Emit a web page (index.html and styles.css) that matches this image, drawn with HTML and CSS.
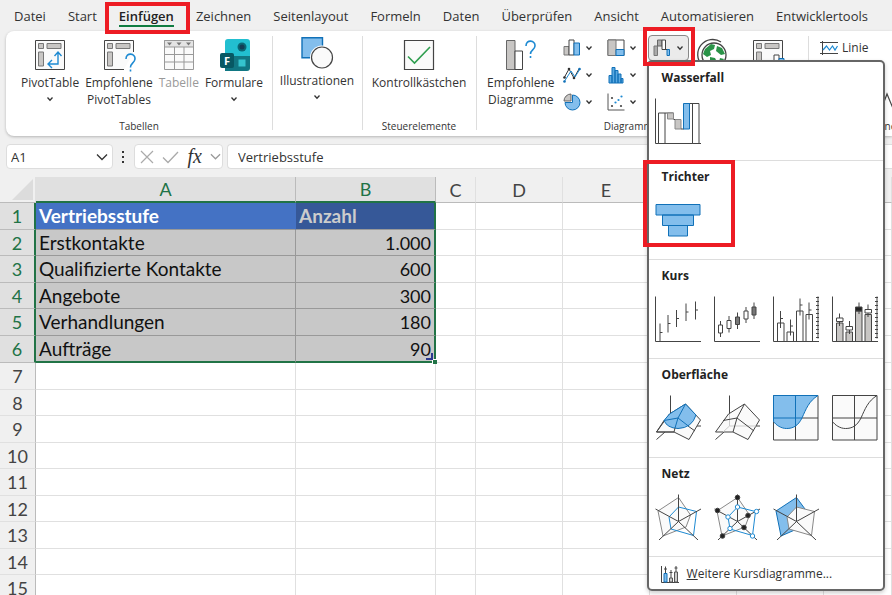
FILE: index.html
```html
<!DOCTYPE html>
<html lang="de">
<head>
  <meta charset="UTF-8">
  <meta name="viewport" content="width=device-width, initial-scale=1.0">
  <title>Trichterdiagramm einfügen</title>
  <link rel="stylesheet" href="styles.css">
</head>
<body>
  <svg class="defs" aria-hidden="true">
    <symbol id="chevron" viewBox="0 0 8 8"><path d="M1.5 2.5 4 5.2 6.5 2.5" fill="none" stroke="#333" stroke-width="1.3"/></symbol>
  </svg>

  <!-- Registerkarten -->
  <nav class="tabs">
    <a href="#">Datei</a>
    <a href="#">Start</a>
    <a href="#" class="active">Einfügen</a>
    <a href="#">Zeichnen</a>
    <a href="#">Seitenlayout</a>
    <a href="#">Formeln</a>
    <a href="#">Daten</a>
    <a href="#">Überprüfen</a>
    <a href="#">Ansicht</a>
    <a href="#">Automatisieren</a>
    <a href="#">Entwicklertools</a>
  </nav>

  <!-- Menüband -->
  <div class="ribbon">
    <section class="group group-tables">
      <div class="tools">
        <button class="tool">
          <svg class="icon" viewBox="0 0 32 32"><path d="M1.5 1.5h29v29h-29z" fill="#fafafa" stroke="#444"/><path d="M4.5 4.5h5v5h-5zM13 4.5h14v5H13zM4.5 13h5v14h-5z" fill="#c8c6c4" stroke="#777"/><path d="M24 13.5v11.5H14.5M20.5 17l3.500-4 3.500 4M18 21l-4 4 4 4" fill="none" stroke="#1e8ad2" stroke-width="1.4"/></svg>
          <span>PivotTable</span>
          <svg class="chev"><use href="#chevron"/></svg>
        </button>
        <button class="tool">
          <svg class="icon" viewBox="0 0 32 32"><path d="M21 30.5H1.5v-29h29V13" fill="#fafafa" stroke="#444"/><path d="M4.5 4.5h5v5h-5zM13 4.5h14v5H13zM4.5 13h5v14h-5z" fill="#c8c6c4" stroke="#777"/><path d="M23 20c0-7 9.500-6 9 0-.4 4-4.500 4-4.500 8.500M27.500 30.500v2" fill="none" stroke="#1e8ad2" stroke-width="1.6"/></svg>
          <span>Empfohlene<br>PivotTables</span>
        </button>
        <button class="tool" disabled>
          <svg class="icon" viewBox="0 0 32 32"><path d="M1.5 1.5h29v29h-29z" fill="#fafafa" stroke="#999"/><path d="M1.5 1.5h29V8h-29z" fill="#e4e4e4" stroke="#999"/><path d="M1.5 15.5h29M1.5 23h29M11.5 8v22.500M21 8v22.500" stroke="#999"/><path d="M4 3.500h5L6.500 6.500zM13.500 3.500h5L16 6.500zM23 3.500h5l-2.500 3z" fill="#777"/></svg>
          <span>Tabelle</span>
        </button>
        <button class="tool">
          <svg class="icon" viewBox="0 0 32 32"><rect x="7" width="25" height="20" rx="3" fill="#22bfd0"/><path d="M7 17h25v12a3 3 0 0 1-3 3H7z" fill="#117783"/><circle cx="24" cy="8" r="4.500" fill="#0a6775"/><circle cx="24" cy="8" r="2.500" fill="#143d55"/><path d="M20.500 20.500h7v7h-7z" fill="#35c4ce"/><rect x="2" y="14" width="14" height="15" rx="2" fill="#075863"/><text x="9" y="26" text-anchor="middle" class="logo-letter">F</text></svg>
          <span>Formulare</span>
          <svg class="chev"><use href="#chevron"/></svg>
        </button>
      </div>
      <div class="group-name">Tabellen</div>
    </section>

    <section class="group group-illustrations">
      <div class="tools">
        <button class="tool">
          <svg class="icon" viewBox="0 0 32 32"><path d="M1 .7h20.500v20H1z" fill="#83beec" stroke="#1171b8" stroke-width="1.4"/><circle cx="21" cy="20.500" r="12" fill="#fff"/><circle cx="21" cy="20.500" r="10.500" fill="#fafafa" stroke="#444" stroke-width="1.2"/></svg>
          <span>Illustrationen</span>
          <svg class="chev"><use href="#chevron"/></svg>
        </button>
      </div>
    </section>

    <section class="group group-controls">
      <div class="tools">
        <button class="tool">
          <svg class="icon" viewBox="0 0 32 32"><path d="M1.5 1.5h29v29h-29z" fill="#fafafa" stroke="#444" stroke-width="1.2"/><path d="M5 17.500 11.500 24 27 8" fill="none" stroke="#2f9e4f" stroke-width="1.6"/></svg>
          <span>Kontrollkästchen</span>
        </button>
      </div>
      <div class="group-name">Steuerelemente</div>
    </section>

    <section class="group group-charts">
      <div class="tools">
        <button class="tool">
          <svg class="icon" viewBox="0 0 32 32"><path d="M1.5 1.5h8.500v29H1.5z" fill="#c8c6c4" stroke="#666"/><path d="M10 12h7.500v18.500H10z" fill="#fff" stroke="#444"/><path d="M21 7c0-7 9.500-6 9 0-.4 4-4.500 4-4.500 8M25.500 17v2" fill="none" stroke="#1e8ad2" stroke-width="1.6"/></svg>
          <span>Empfohlene<br>Diagramme</span>
        </button>
        <div class="chart-grid">
          <button class="mini" aria-label="Säulendiagramm">
            <svg viewBox="0 0 18 18"><path d="M1 7.500h5v8.500H1z" fill="#c8c6c4" stroke="#777"/><path d="M6 1h5v15H6z" fill="#fff" stroke="#444"/><path d="M11 4h5.500v12H11z" fill="#83beec" stroke="#1171b8"/></svg>
            <svg class="chev"><use href="#chevron"/></svg>
          </button>
          <button class="mini" aria-label="Hierarchiediagramm">
            <svg viewBox="0 0 18 18"><path d="M1 1h16v15.500H1z" fill="#fff" stroke="#444"/><path d="M1 1h8v15.500H1z" fill="#c8c6c4" stroke="#777"/><path d="M9 10.500h8v6H9z" fill="#83beec" stroke="#1171b8"/></svg>
            <svg class="chev"><use href="#chevron"/></svg>
          </button>
          <div class="picker">
            <button class="mini open" aria-label="Wasserfall-, Trichter-, Kurs-, Oberflächen- oder Netzdiagramm" aria-expanded="true">
              <svg viewBox="0 0 18 18"><path d="M1 7h3.500v9.500H1z" fill="#aaa" stroke="#777"/><path d="M4.500 1H9v6H4.500z" fill="#aaa" stroke="#666"/><path d="M9 1h3.500v9.500H9z" fill="#fff" stroke="#444"/><path d="M14 10.500h2.500v6H14z" fill="#83beec" stroke="#1171b8"/><path d="M12 10.500h2" stroke="#444"/></svg>
              <svg class="chev"><use href="#chevron"/></svg>
            </button>

            <!-- Aufgeklapptes Diagrammmenü -->
            <div class="menu">
              <section class="menu-section">
                <h2>Wasserfall</h2>
                <div class="choices">
                  <button class="choice" aria-label="Wasserfall">
                    <svg viewBox="0 0 46 46" class="line"><path d="M.5 .5v45H46" fill="none"/><path d="M3.500 15H10v30.500H3.500z" fill="#fff"/><path d="M10 15h8.500" /><path d="M12.500 15h6v6h-6zM20 21.500h6V31h-6z" class="grey"/><path d="M18.500 21.500H20M26 31h3" /><path d="M37.500 5.500H44v40h-6.500z" fill="#fff"/><path d="M34 5.500h4"/><path d="M28.500 5.500h6V31h-6z" class="blue"/></svg>
                  </button>
                </div>
              </section>
              <section class="menu-section marked">
                <h2>Trichter</h2>
                <div class="choices">
                  <button class="choice" aria-label="Trichter">
                    <svg viewBox="0 0 46 46" class="line"><path d="M1 7.500h44V18H1zM7.500 18h31v10.500h-31zM13.500 28.500h19V39h-19z" class="blue"/></svg>
                  </button>
                </div>
              </section>
              <section class="menu-section">
                <h2>Kurs</h2>
                <div class="choices">
                  <button class="choice" aria-label="Kurs: Höchst-Tiefst-Geschlossen">
                    <svg viewBox="0 0 46 46" class="line"><path d="M.5 .5v45H46M5 27.500V45M5 36.500h2.500M13 19v17.500M13 27.500h2.500M21.500 14v17M21.500 22.500H24M31 7.500V25M31 16h2.500M40.500 5.500v18M40.500 14H43" fill="none"/></svg>
                  </button>
                  <button class="choice" aria-label="Kurs: Öffnung-Höchst-Tiefst-Geschlossen">
                    <svg viewBox="0 0 46 46" class="line"><path d="M.5 .5v45H46M6.500 25v16M15 20v16.500M23.500 16.500V33M32 11v16M40 6.500V23" fill="none"/><path d="M4.500 29h4v8h-4zM13 24.500h4v8h-4zM30 15h4v8h-4z" fill="#fff"/><path d="M21.500 21h4v7.500h-4zM38 11h4v8h-4z" fill="#777"/></svg>
                  </button>
                  <button class="choice" aria-label="Kurs: Volumen-Höchst-Tiefst-Geschlossen">
                    <svg viewBox="0 0 46 46" class="line"><path d="M4.500 27H11v18.500H4.500zM14 36h6.500v9.500H14zM23.500 15H30v30.500h-6.500zM33 18.500h6.500v27H33z" fill="#fff"/><path d="M.5 .5v45H46M7.500 15v17M7.500 22.500H10M17.500 23.500v16M17.500 30H20M27 2.500v17M27 9h2.500M36 6.500v17M36 14h2.500M45 .5v42" fill="none"/><path d="M45 1v44" class="ticks"/></svg>
                  </button>
                  <button class="choice" aria-label="Kurs: Volumen-Öffnung-Höchst-Tiefst-Geschlossen">
                    <svg viewBox="0 0 46 46" class="line"><path d="M4.500 27H11v18.500H4.500zM14 36h6.500v9.500H14zM23.500 15H30v30.500h-6.500zM33 18.500h6.500v27H33z" fill="#c8c6c4"/><path d="M.5 .5v45H46M7.500 17.500V30M17.500 25v13M27 6.500V18M36 8.500V21M45 .5v42" fill="none"/><path d="M4.500 22H11v3.500H4.500zM14 30.500h6.500V34H14zM33 13.500h6.500V17H33z" fill="#fff"/><path d="M23.500 11H30v4h-6.500z" fill="#222"/><path d="M45 1v44" class="ticks"/></svg>
                  </button>
                </div>
              </section>
              <section class="menu-section">
                <h2>Oberfläche</h2>
                <div class="choices">
                  <button class="choice" aria-label="3D-Oberfläche">
                    <svg viewBox="0 0 46 46" class="line"><path d="M15.500 .5V19M1.500 44.500 10 37M42 31h4" fill="none"/><path d="M14.500 19 30.500 9l15 16L34 44.500 19 37H1.500z" fill="#fafafa"/><path d="M14.500 19 30.500 9 41 20q-4 13-18 13.500Q12 33 9 25.500z" class="blue"/><path d="M9 25.500 1.500 37H19l1-4M33 31l7 5" fill="none"/><path d="M30.500 9 23 23l-3 10M9 25.500 23 23l11 8.500" fill="none" class="blue-line"/></svg>
                  </button>
                  <button class="choice" aria-label="3D-Oberfläche (Drahtmodell)">
                    <svg viewBox="0 0 46 46" class="line"><path d="M15.500 .5V19M1.500 44.500 10 37M42 31h4" fill="none"/><path d="M14.500 19 30.500 9l15 16L34 44.500 19 37H1.500z" fill="#fafafa"/><path d="M15.500 19v12H42M15.500 31 9 37" fill="none" stroke="#ccc"/><path d="M30.500 9 23 23l-4 14M9 25.500 23 23l17 13" fill="none"/></svg>
                  </button>
                  <button class="choice" aria-label="Oberfläche">
                    <svg viewBox="0 0 46 46" class="line"><path d="M.5 .5H45v44.500H.5z" fill="#fafafa"/><path d="M22.500 .5V45M.5 23H45" /><path d="M.5 .5H45C36 6 33 14 29 23c-4 8-9 10.500-15.500 10.500C8 33.500 3 30 .5 26.500z" class="blue"/><path d="M22.500 .5V31M.5 23H29" class="blue-line"/></svg>
                  </button>
                  <button class="choice" aria-label="Oberfläche (Drahtmodell)">
                    <svg viewBox="0 0 46 46" class="line"><path d="M.5 .5H45v44.500H.5z" fill="#fafafa"/><path d="M22.500 .5V45M.5 23H45M45 .5C36 6 33 14 29 23c-4 8-9 10.500-15.500 10.500C8 33.500 3 30 .5 26.500" fill="none"/></svg>
                  </button>
                </div>
              </section>
              <section class="menu-section">
                <h2>Netz</h2>
                <div class="choices">
                  <button class="choice" aria-label="Netz">
                    <svg viewBox="0 0 46 46" class="line"><path d="M23.500 3.500 3 17l5 25 23-9 4.500-12z" fill="#fafafa" stroke="#888"/><path d="m23.500 13 18 4.500-3 24L16 35l-2-12z" fill="none" stroke="#1e8ad2"/><path d="M23.500 27.500V.5M23.500 27.500 46 15M23.500 27.500 43 46M23.500 27.500 4 46M23.500 27.500.5 15"/></svg>
                  </button>
                  <button class="choice" aria-label="Netz mit Datenpunkten">
                    <svg viewBox="0 0 46 46" class="line"><path d="M23.500 3.500 3 17l5 25 23-9 4.500-12z" fill="#fafafa" stroke="#888"/><path d="M23.500 27.500V.5M23.500 27.500 46 15M23.500 27.500 43 46M23.500 27.500 4 46M23.500 27.500.5 15"/><path d="m23.500 13 18 4.500-3 24L16 35l-2-12z" fill="none" stroke="#1e8ad2"/><g fill="#222"><circle cx="23.500" cy="3.500" r="2.300"/><circle cx="3.500" cy="16.500" r="2.300"/><circle cx="8.500" cy="42" r="2.300"/><circle cx="30" cy="33.500" r="2.300"/><circle cx="34" cy="21.500" r="2.300"/></g><g fill="#fff" stroke="#1e8ad2"><circle cx="23.500" cy="13" r="2.200"/><circle cx="42.500" cy="17.500" r="2.200"/><circle cx="38.500" cy="42" r="2.200"/><circle cx="16" cy="34.500" r="2.200"/><circle cx="14" cy="23" r="2.200"/></g></svg>
                  </button>
                  <button class="choice" aria-label="Gefülltes Netz">
                    <svg viewBox="0 0 46 46" class="line"><path d="M23.500 3.500 3 17l5 25 16-7 8-20z" class="blue"/><path d="m23.500 13 18 4.500-3 24L16 35l-2-12z" fill="#fafafa" stroke="#888"/><path d="M23.500 27.500V.5M23.500 27.500 46 15M23.500 27.500 43 46M23.500 27.500 4 46M23.500 27.500.5 15"/></svg>
                  </button>
                </div>
              </section>
              <button class="menu-more">
                <svg viewBox="0 0 18 18"><path d="M.5 1v16.500H18M4.500 1.500V8M10 5v8M15 1v9" fill="none" stroke="#444"/><path d="M3 8.500h3v8.500H3z" fill="#83beec" stroke="#1171b8"/><path d="M8.500 13h3v4h-3zM13.500 7h3v10h-3z" fill="#ccc" stroke="#555"/><path d="M3 4h3M8.500 7.500h3M13.500 3h3" stroke="#444"/></svg>
                <span><u>W</u>eitere Kursdiagramme...</span>
              </button>
            </div>
          </div>
          <button class="mini" aria-label="Liniendiagramm">
            <svg viewBox="0 0 18 18"><path d="M1 12 6 3l5 9 5-9" fill="none" stroke="#333"/><path d="m1 16 7-11 4 6 5-8" fill="none" stroke="#1e8ad2"/><g fill="#333"><circle cx="6" cy="3" r="1.300"/><circle cx="11" cy="12" r="1.300"/><circle cx="1.500" cy="11.500" r="1.300"/></g><g fill="#1171b8"><circle cx="1.500" cy="15.500" r="1.300"/><circle cx="16.500" cy="3" r="1.300"/></g></svg>
            <svg class="chev"><use href="#chevron"/></svg>
          </button>
          <button class="mini second" aria-label="Statistikdiagramm">
            <svg viewBox="0 0 18 18"><path d="M2 9.500h3V17H2zM5 1.500h3V17H5zM8 4.500h3V17H8zM11 8h3v9h-3zM14 12.500h2V17h-2z" fill="#5aa8e0" stroke="#1171b8"/></svg>
            <svg class="chev"><use href="#chevron"/></svg>
          </button>
          <button class="mini" aria-label="Kreisdiagramm">
            <svg viewBox="0 0 18 18"><path d="M9.500 2A7.500 7.500 0 1 1 2 9.500h7.500z" fill="#83beec" stroke="#1171b8"/><path d="M8 8H1a7 7 0 0 1 7-7z" fill="#c8c6c4" stroke="#666"/></svg>
            <svg class="chev"><use href="#chevron"/></svg>
          </button>
          <button class="mini second" aria-label="Punktdiagramm">
            <svg viewBox="0 0 18 18"><path d="M1 .5v16.500h16.500" fill="none" stroke="#555"/><g fill="#444"><circle cx="5" cy="5" r="1.100"/><circle cx="5" cy="13" r="1.100"/><circle cx="14" cy="13" r="1.100"/></g><g fill="#1e8ad2"><circle cx="8.500" cy="9.500" r="1.100"/><circle cx="14.500" cy="3.500" r="1.100"/><circle cx="11.500" cy="7" r="1.100"/></g></svg>
            <svg class="chev"><use href="#chevron"/></svg>
          </button>
        </div>
        <button class="tool tool-maps" aria-label="Karten">
          <svg class="icon" viewBox="0 0 32 32"><path d="M25 3A15 15 0 0 0 6 26" fill="none" stroke="#444" stroke-width="1.3"/><circle cx="18" cy="16" r="12" fill="#fff" stroke="#444" stroke-width="1.3"/><path d="m9 10 6-5 4 1-1 4-4 2 1 4-4 2-4-3zM21 7l5 2 3 6-4 1-5-4zM14 18l5 1 2 4-3 5-4-3zM24 19l4 1-3 5-2-2z" fill="#2a9348"/></svg>
        </button>
        <button class="tool" aria-label="PivotChart">
          <svg class="icon" viewBox="0 0 32 32"><path d="M1.5 1.5h29v29h-29z" fill="#fafafa" stroke="#444"/><path d="M4.500 4.500h5v5h-5zM13 4.500h14v5H13zM4.500 13h5v14h-5z" fill="#c8c6c4" stroke="#777"/><path d="M22 16h5v15h-5z" fill="#fff" stroke="#444"/><path d="M27 19.500h5V31h-5z" fill="#83beec" stroke="#1171b8"/></svg>
        </button>
      </div>
      <div class="group-name">Diagramme</div>
    </section>

    <section class="group group-sparklines">
      <div class="tools">
        <button class="spark">
          <svg viewBox="0 0 18 14"><path d="M0 1.500h18M0 12.500h18M2.500 0v14" stroke="#444"/><path d="m3 9 3.500-4 3 4 3-4 2.500 4L17.500 5" fill="none" stroke="#1e8ad2" stroke-width="1.2"/></svg>
          <span>Linie</span>
        </button>
        <svg class="slicer" viewBox="0 0 18 18"><path d="m0 11 3-8 5 12 4-12 5 8" fill="none" stroke="#444" stroke-width="1.2"/></svg>
      </div>
      <div class="group-name">Sparklines</div>
    </section>
  </div>

  <!-- Bearbeitungsleiste -->
  <div class="formula-bar">
    <div class="box name-box">
      <input type="text" value="A1" aria-label="Namenfeld">
      <button aria-label="Namen anzeigen"><svg viewBox="0 0 12 12"><path d="m1 3.500 5 5 5-5" fill="none" stroke="#333" stroke-width="1.3"/></svg></button>
    </div>
    <svg class="dots" viewBox="0 0 4 14"><path d="M1 1h2v2H1zM1 6h2v2H1zM1 11h2v2H1z" fill="#333"/></svg>
    <div class="box fx-box">
      <button aria-label="Abbrechen"><svg viewBox="0 0 14 14"><path d="m1 1 12 12M13 1 1 13" stroke="#aaa" stroke-width="1.2"/></svg></button>
      <button aria-label="Eingeben"><svg class="check" viewBox="0 0 17 14"><path d="m1 7.500 5 5L16 2" fill="none" stroke="#aaa" stroke-width="1.3"/></svg></button>
      <button class="fx" aria-label="Funktion einfügen">fx</button>
      <button aria-label="Funktionen"><svg class="small" viewBox="0 0 12 12"><path d="m1 3.500 5 5 5-5" fill="none" stroke="#999" stroke-width="1.3"/></svg></button>
    </div>
    <input class="box formula" type="text" value="Vertriebsstufe" aria-label="Bearbeitungsleiste">
  </div>

  <!-- Tabellenblatt -->
  <table class="sheet">
    <colgroup>
      <col class="col-num"><col class="col-a"><col class="col-b"><col class="col-c"><col class="col-d"><col class="col-d"><col class="col-d"><col class="col-d"><col>
    </colgroup>
    <thead>
      <tr><th class="corner"><svg viewBox="0 0 21 21"><path d="M21 0v21H0z" fill="#dcdcdc"/></svg></th><th class="sel">A</th><th class="sel">B</th><th>C</th><th>D</th><th>E</th><th></th><th></th><th></th></tr>
    </thead>
    <tbody class="selected">
      <tr class="title"><th>1</th><td>Vertriebsstufe</td><td>Anzahl</td><td></td><td></td><td></td><td></td><td></td><td></td></tr>
      <tr><th>2</th><td>Erstkontakte</td><td>1.000</td><td></td><td></td><td></td><td></td><td></td><td></td></tr>
      <tr><th>3</th><td>Qualifizierte Kontakte</td><td>600</td><td></td><td></td><td></td><td></td><td></td><td></td></tr>
      <tr><th>4</th><td>Angebote</td><td>300</td><td></td><td></td><td></td><td></td><td></td><td></td></tr>
      <tr><th>5</th><td>Verhandlungen</td><td>180</td><td></td><td></td><td></td><td></td><td></td><td></td></tr>
      <tr><th>6</th><td>Aufträge</td><td>90<i class="handle"></i></td><td></td><td></td><td></td><td></td><td></td><td></td></tr>
    </tbody>
    <tbody>
      <tr><th>7</th><td></td><td></td><td></td><td></td><td></td><td></td><td></td><td></td></tr>
      <tr><th>8</th><td></td><td></td><td></td><td></td><td></td><td></td><td></td><td></td></tr>
      <tr><th>9</th><td></td><td></td><td></td><td></td><td></td><td></td><td></td><td></td></tr>
      <tr><th>10</th><td></td><td></td><td></td><td></td><td></td><td></td><td></td><td></td></tr>
      <tr><th>11</th><td></td><td></td><td></td><td></td><td></td><td></td><td></td><td></td></tr>
      <tr><th>12</th><td></td><td></td><td></td><td></td><td></td><td></td><td></td><td></td></tr>
      <tr><th>13</th><td></td><td></td><td></td><td></td><td></td><td></td><td></td><td></td></tr>
      <tr><th>14</th><td></td><td></td><td></td><td></td><td></td><td></td><td></td><td></td></tr>
      <tr><th>15</th><td></td><td></td><td></td><td></td><td></td><td></td><td></td><td></td></tr>
    </tbody>
  </table>
</body>
</html>
```

FILE: styles.css
```css
* {
  box-sizing: border-box;
}

body {
  margin: 0;
  height: 100vh;
  overflow: hidden;
  background: #f0f0f0;
  color: #333;
  font-family: "Open Sans", "Noto Sans", sans-serif;
  font-size: 12px;
}

button {
  font: inherit;
  color: inherit;
  background: none;
  border: none;
  padding: 0;
}

svg {
  display: block;
  flex: none;
}

.defs {
  display: none;
}

/* Registerkarten */
.tabs {
  display: flex;
  gap: 22px;
  height: 31px;
  padding: 6px 14px 0;
  font-size: 13px;
  line-height: 20px;
  white-space: nowrap;
}

.tabs a {
  color: #333;
  text-decoration: none;
}

.tabs .active {
  position: relative;
  height: 21px;
  font-weight: 600;
  color: #222;
  border-bottom: 2px solid #107c41;
}

/* rote Markierungen */
.tabs .active::after,
.picker::after,
.marked::after {
  content: "";
  position: absolute;
  border: 4px solid #ed1c24;
  pointer-events: none;
}

.tabs .active::after {
  inset: -4px -16px -9px -14px;
}

/* Menüband */
.ribbon {
  display: flex;
  height: 105px;
  margin-left: 6px;
  background: #fff;
  border-radius: 8px 0 0 8px;
  box-shadow: 0 1px 3px rgba(0, 0, 0, 0.25);
}

.group {
  position: relative;
  flex: none;
  display: flex;
  flex-direction: column;
  justify-content: space-between;
  padding: 8px 0 2px;
}

.group + .group::before {
  content: "";
  position: absolute;
  left: 0;
  top: 5px;
  bottom: 6px;
  width: 1px;
  background: #ddd;
}

.group-tables {
  width: 266px;
}

.group-illustrations {
  width: 90px;
  padding-top: 6px;
}

.group-controls {
  width: 114px;
}

.group-charts {
  width: 332px;
}

.group-sparklines {
  width: 138px;
}

.tools {
  display: flex;
  justify-content: center;
  gap: 8px;
}

.group-tables .tools {
  justify-content: flex-start;
  gap: 6px;
  padding-left: 15px;
}

.group-charts .tools {
  justify-content: flex-start;
  padding-left: 11px;
}

.tool {
  display: flex;
  flex-direction: column;
  align-items: center;
  line-height: 17px;
  white-space: nowrap;
}

.tool .icon {
  width: 32px;
  height: 32px;
  margin-bottom: 3px;
  overflow: visible;
}

.tool:disabled {
  color: #999;
}

.tool-maps {
  margin-right: 16px;
}

.chev {
  width: 8px;
  height: 8px;
}

.tool .chev {
  margin-top: 4px;
}

.logo-letter {
  font-size: 11px;
  font-weight: 700;
  fill: #fff;
}

.group-name {
  font-size: 10px;
  line-height: 16px;
  text-align: center;
}

.group-charts .group-name {
  padding-right: 22px;
}

.chart-grid {
  display: grid;
  grid-template-columns: 44px 39px 42px;
  grid-auto-rows: 27px;
  height: 81px;
  margin-top: -4px;
}

.mini {
  display: flex;
  align-items: center;
  gap: 4px;
  height: 26px;
}

.mini svg:first-child {
  width: 18px;
  height: 18px;
}

.mini.second {
  grid-column: 2 / 4;
}

.picker {
  position: relative;
}

.picker::after {
  z-index: 3;
  inset: -8px -7px -4px -3px;
}

.mini.open {
  width: 41px;
  padding-left: 4px;
  gap: 5px;
  margin-left: 2px;
  background: #ebebeb;
  border: 1px solid #888;
  border-radius: 4px;
}

.spark {
  display: flex;
  align-items: center;
  gap: 4px;
  line-height: 18px;
}

.spark svg {
  width: 18px;
  height: 14px;
}

.group-sparklines .tools {
  align-items: flex-start;
  justify-content: flex-start;
  gap: 16px;
  padding-left: 12px;
}

.slicer {
  width: 18px;
  height: 18px;
  margin-top: 52px;
}

/* Diagrammmenü */
.menu {
  position: absolute;
  z-index: 2;
  top: 25px;
  left: 1px;
  width: 238px;
  background: #fff;
  border: 2px solid #666;
  border-radius: 5px;
  box-shadow: 0 2px 4px rgba(0, 0, 0, 0.2);
}

.menu-section {
  position: relative;
  padding: 6px 6px 16px;
  border-bottom: 1px solid #ddd;
}

.menu-section h2 {
  margin: 0 0 10px;
  padding-left: 7px;
  font-size: 12px;
  line-height: 20px;
  font-weight: 700;
  color: #222;
}

.choices {
  display: flex;
  gap: 13px;
}

.choice svg {
  width: 46px;
  height: 46px;
}

.marked::after {
  inset: -1px 148px 12px -6px;
}

.menu-more {
  display: flex;
  align-items: center;
  gap: 8px;
  padding: 8px 12px 6px;
  line-height: 18px;
}

.menu-more svg {
  width: 18px;
  height: 18px;
}

.line {
  stroke: #444;
}

.line .grey {
  fill: #c8c6c4;
  stroke: #888;
}

.line .blue {
  fill: #83beec;
  stroke: #1171b8;
}

.line .blue-line {
  stroke: #1171b8;
}

.line .ticks {
  stroke-width: 4;
  stroke-dasharray: 1 3;
}

/* Bearbeitungsleiste */
.formula-bar {
  display: flex;
  align-items: center;
  height: 41px;
  padding-left: 6px;
  font-size: 13px;
}

.box {
  height: 25px;
  background: #fff;
  border: 1px solid #ddd;
  border-radius: 4px;
}

.formula-bar input {
  font: inherit;
  color: #333;
  min-width: 0;
}

.name-box {
  display: flex;
  align-items: center;
  width: 107px;
  padding: 0 4px;
}

.name-box input {
  flex: 1;
  padding: 0;
  border: none;
}

.name-box svg {
  width: 12px;
  height: 12px;
}

.dots {
  width: 4px;
  height: 14px;
  margin: 0 9px 0 8px;
}

.fx-box {
  display: flex;
  align-items: center;
  justify-content: space-between;
  width: 89px;
  padding: 0 1px 0 5px;
  margin-right: 4px;
}

.fx-box svg {
  width: 14px;
  height: 14px;
}

.fx-box .check {
  width: 17px;
}

.fx-box .small {
  width: 11px;
  height: 11px;
}

.fx-box .fx {
  font: italic 20px "Liberation Serif", serif;
}

.formula-bar .formula {
  flex: 1;
  padding: 0 10px;
  border-radius: 4px 0 0 4px;
  border-right: none;
}

/* Tabellenblatt */
.sheet {
  table-layout: fixed;
  width: 100%;
  border-collapse: separate;
  border-spacing: 0;
  background: #fff;
  font-family: Lato, sans-serif;
  font-size: 18px;
  line-height: 20px;
  color: #111;
}

.col-num {
  width: 36px;
}

.col-a {
  width: 260px;
}

.col-b {
  width: 140px;
}

.col-c {
  width: 40px;
}

.col-d {
  width: 87px;
}

.sheet tr {
  height: 27px;
}

.sheet thead tr,
.sheet tbody tr:nth-child(even) {
  height: 26px;
}

.sheet .selected tr:last-child {
  height: 27px;
}

.sheet th,
.sheet td {
  padding: 0 3px;
  border-right: 1px solid #e0e0e0;
  border-bottom: 1px solid #e0e0e0;
  text-align: left;
  white-space: nowrap;
}

.sheet th {
  padding: 0;
  font-weight: 400;
  text-align: center;
  background: #f0f0f0;
  color: #444;
}

.sheet thead th {
  border-bottom-color: #bbb;
}

.sheet tbody th {
  border-right-color: #bbb;
}

.sheet .corner svg {
  width: 21px;
  height: 21px;
  margin-left: 12px;
}

.sheet thead .sel {
  background: #e0e0e0;
  border-right-color: #bbb;
  border-bottom: 2px solid #217346;
  color: #217346;
}

.selected th {
  background: #e0e0e0;
  color: #217346;
}

.sheet .selected th {
  border-right: 2px solid #217346;
  border-bottom-color: #bbb;
}

.sheet .selected td:nth-child(2),
.sheet .selected td:nth-child(3) {
  position: relative;
  background: #c8c8c8;
  border-color: #999;
}

.sheet .selected td:nth-child(2) {
  font-size: 19px;
}

.sheet .selected td:nth-child(3) {
  text-align: right;
  border-right: 2px solid #217346;
}

.sheet .selected tr:last-child td:nth-child(2),
.sheet .selected tr:last-child td:nth-child(3) {
  border-bottom: 2px solid #217346;
}

.sheet .selected .title td:nth-child(2) {
  background: #4472c4;
  color: #fff;
  font-weight: 700;
  border-right-color: #4472c4;
}

.sheet .selected .title td:nth-child(3) {
  background: #365898;
  color: #ccc;
  font-size: 19px;
  font-weight: 700;
  text-align: left;
}

.handle {
  position: absolute;
  right: -3px;
  bottom: -3px;
  width: 5px;
  height: 5px;
  background: #217346;
  border-top: 1px solid #fff;
  border-left: 1px solid #fff;
}

.handle::before {
  content: "";
  position: absolute;
  right: 4px;
  bottom: 4px;
  width: 5px;
  height: 5px;
  border-right: 2px solid #2b3990;
  border-bottom: 2px solid #2b3990;
}
```
